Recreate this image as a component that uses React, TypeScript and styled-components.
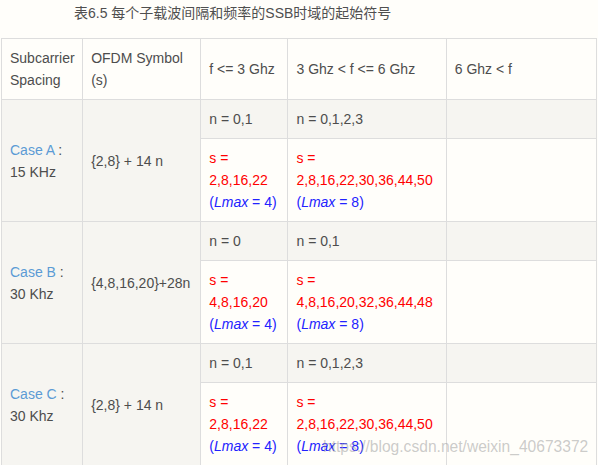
import React from "react";
import styled, { createGlobalStyle } from "styled-components";

const Global = createGlobalStyle`
  html, body { margin: 0; padding: 0; background: #fffefa; }
  body { font-family: "Liberation Sans", Arial, "Noto Sans CJK SC", sans-serif; color: #4d4d4d; }
`;

const Page = styled.div`
  position: relative;
  width: 598px;
  height: 465px;
  overflow: hidden;
  padding-left: 1px;
  box-sizing: border-box;
`;

const Caption = styled.div`
  padding: 2px 0 0 73px;
  height: 22px;
  line-height: 22px;
  font-size: 14px;
  color: #4f4f4f;
  margin-bottom: 14px;
  font-family: "Liberation Sans", Arial, "Noto Sans CJK SC", sans-serif;
`;

const Table = styled.table`
  border-collapse: collapse;
  table-layout: fixed;
  width: 596px;
  font-size: 14px;
  line-height: 22px;
`;

const Cell = styled.td<{ $shade?: boolean }>`
  border: 1px solid #dddddd;
  padding: 8px;
  vertical-align: middle;
  white-space: nowrap;
  background: ${(p) => (p.$shade ? "#f6f5f1" : "#fffefa")};
  color: #4d4d4d;
`;

const HeadCell = styled(Cell).attrs({ as: "th" })`
  font-weight: normal;
  text-align: left;
`;

const CaseName = styled.span`
  color: #5b9bd5;
`;

const Red = styled.span`
  color: #ff0000;
`;

const Blue = styled.span`
  color: #2222ff;
`;

const Watermark = styled.div`
  position: absolute;
  left: 323px;
  top: 436px;
  font-size: 15.6px;
  line-height: 22px;
  color: rgba(160, 160, 160, 0.55);
  white-space: nowrap;
  pointer-events: none;
`;

type Row = {
  name: string;
  spacing: string;
  symbol: string;
  n3: string;
  n6: string;
  s3: string;
  s6: string;
};

const rows: Row[] = [
  { name: "Case A", spacing: "15 KHz", symbol: "{2,8} + 14 n", n3: "n = 0,1", n6: "n = 0,1,2,3", s3: "2,8,16,22", s6: "2,8,16,22,30,36,44,50" },
  { name: "Case B", spacing: "30 Khz", symbol: "{4,8,16,20}+28n", n3: "n = 0", n6: "n = 0,1", s3: "4,8,16,20", s6: "4,8,16,20,32,36,44,48" },
  { name: "Case C", spacing: "30 Khz", symbol: "{2,8} + 14 n", n3: "n = 0,1", n6: "n = 0,1,2,3", s3: "2,8,16,22", s6: "2,8,16,22,30,36,44,50" },
];

const SValue = ({ list, l }: { list: string; l: number }) => (
  <>
    <Red>s =</Red>
    <br />
    <Red>{list}</Red>
    <br />
    <Blue>
      (<i>Lmax</i> = {l})
    </Blue>
  </>
);

export default function App() {
  return (
    <Page>
      <Global />
      <Caption>表6.5 每个子载波间隔和频率的SSB时域的起始符号</Caption>
      <Table>
        <colgroup>
          <col style={{ width: 81 }} />
          <col style={{ width: 118 }} />
          <col style={{ width: 87 }} />
          <col style={{ width: 158 }} />
          <col style={{ width: 150 }} />
        </colgroup>
        <thead>
          <tr>
            <HeadCell>
              Subcarrier
              <br />
              Spacing
            </HeadCell>
            <HeadCell>
              OFDM Symbol
              <br />
              (s)
            </HeadCell>
            <HeadCell>f &lt;= 3 Ghz</HeadCell>
            <HeadCell>3 Ghz &lt; f &lt;= 6 Ghz</HeadCell>
            <HeadCell>6 Ghz &lt; f</HeadCell>
          </tr>
        </thead>
        <tbody>
          {rows.map((r) => (
            <React.Fragment key={r.name}>
              <tr>
                <Cell $shade rowSpan={2}>
                  <CaseName>{r.name}</CaseName> :
                  <br />
                  {r.spacing}
                </Cell>
                <Cell $shade rowSpan={2}>
                  {r.symbol}
                </Cell>
                <Cell $shade>{r.n3}</Cell>
                <Cell $shade>{r.n6}</Cell>
                <Cell $shade></Cell>
              </tr>
              <tr>
                <Cell>
                  <SValue list={r.s3} l={4} />
                </Cell>
                <Cell>
                  <SValue list={r.s6} l={8} />
                </Cell>
                <Cell></Cell>
              </tr>
            </React.Fragment>
          ))}
        </tbody>
      </Table>
      <Watermark>https://blog.csdn.net/weixin_40673372</Watermark>
    </Page>
  );
}
